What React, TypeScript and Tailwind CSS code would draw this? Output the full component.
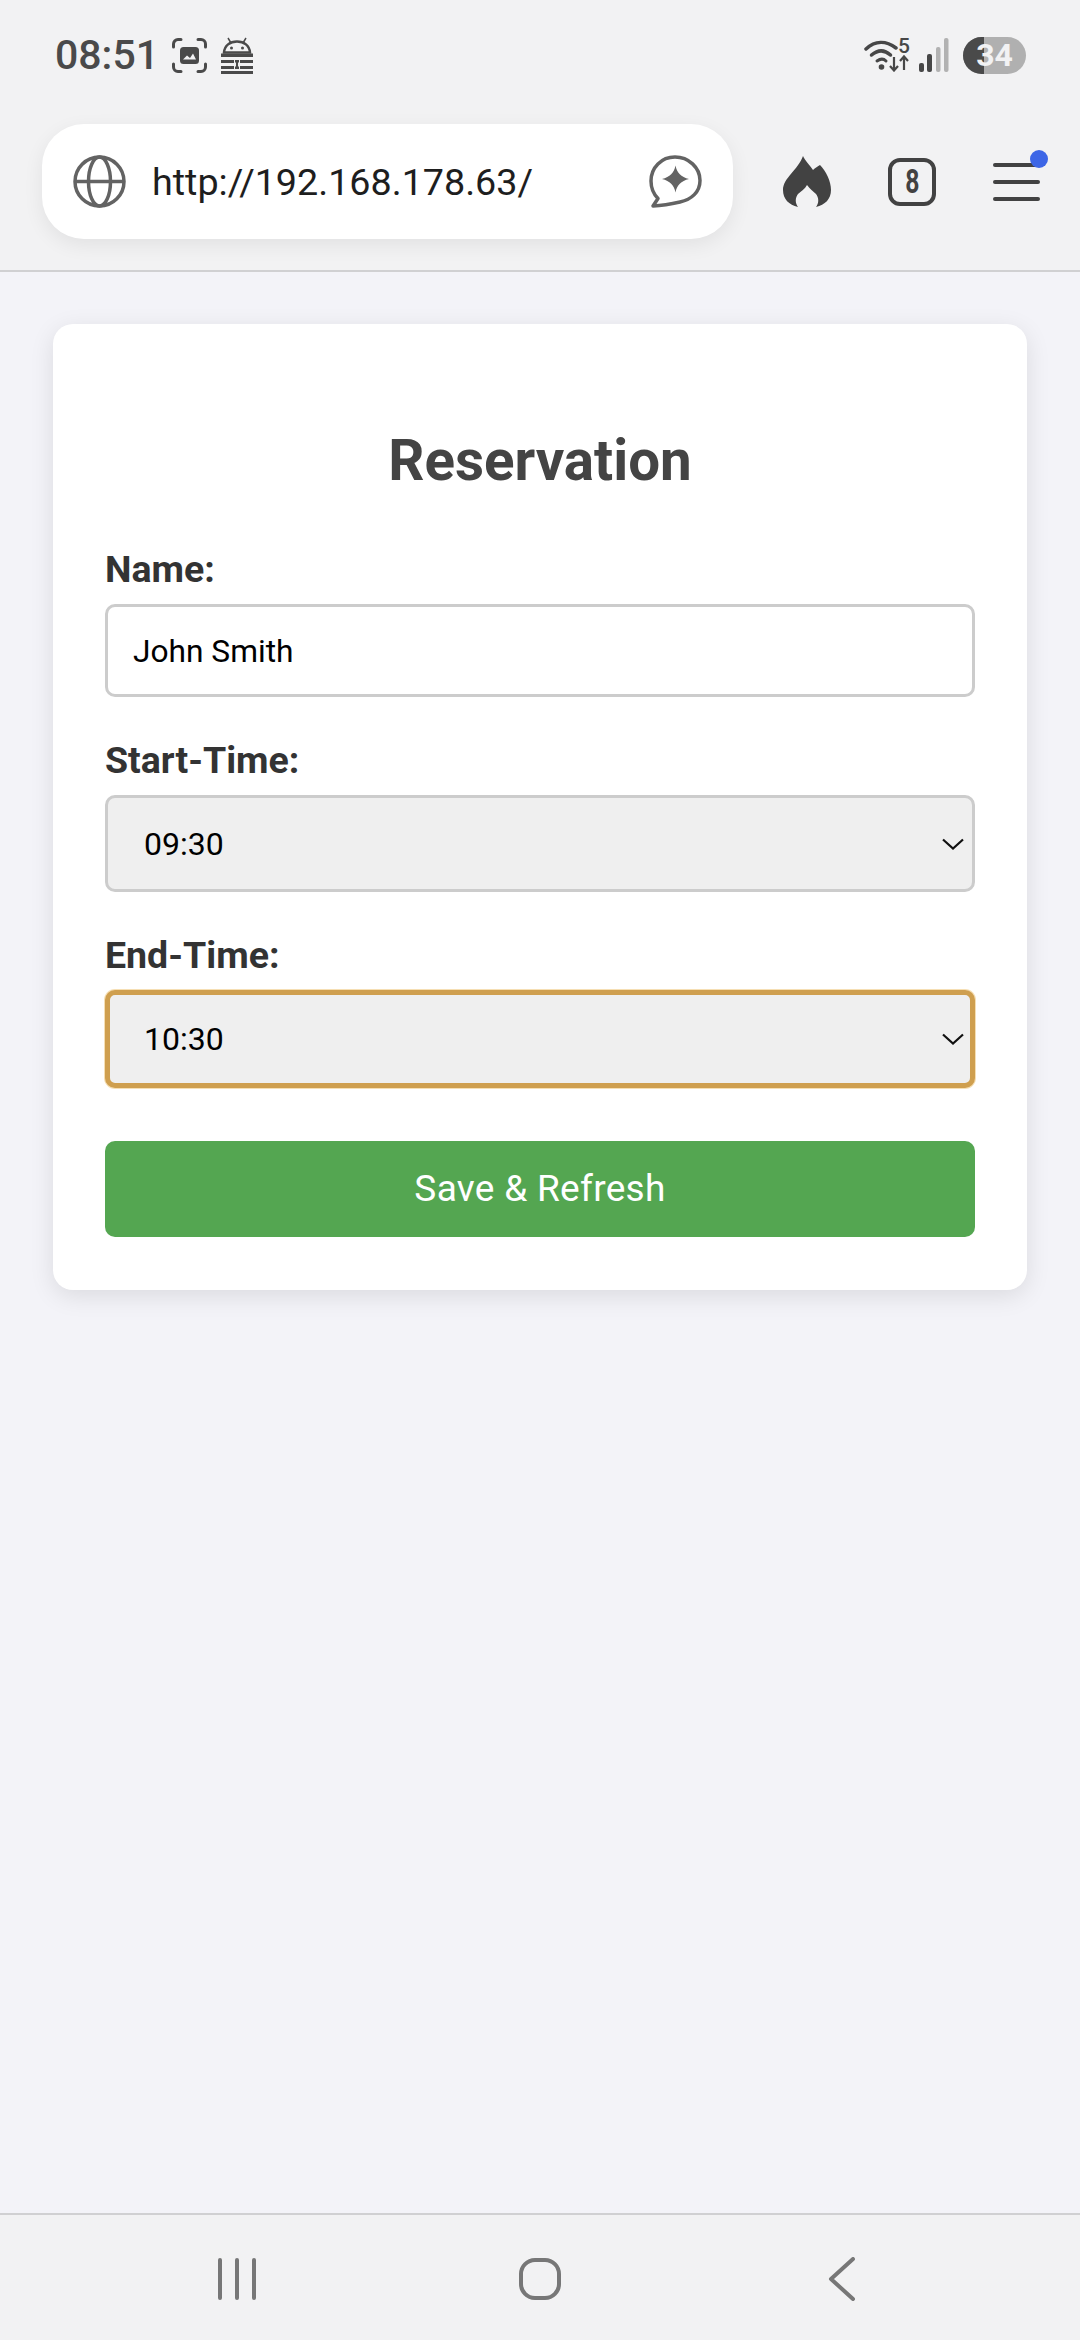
import React from 'react';

function ScreenshotIcon() {
  return (
    <svg width="35" height="35" viewBox="0 0 35 35" fill="none">
      <path d="M1.5 9V6a4.5 4.5 0 0 1 4.5-4.5h3M26 1.500h3A4.500 4.500 0 0 1 33.500 6v3M33.500 26v3a4.500 4.500 0 0 1-4.500 4.500h-3M9 33.500H6A4.500 4.500 0 0 1 1.500 29v-3" stroke="#4a4a4a" strokeWidth="3" strokeLinecap="round" />
      <rect x="8" y="9" width="19" height="17" rx="3.500" fill="#4a4a4a" />
      <path d="M11 21.500l4-4 3 2.500 3-4.500 3 6z" fill="#f2f2f3" />
    </svg>
  );
}

function KeyDroidIcon() {
  return (
    <svg width="34" height="37" viewBox="0 0 34 37" fill="none">
      <path d="M8 1l3 5M26 1l-3 5" stroke="#4a4a4a" strokeWidth="1.500" />
      <path d="M4 15.500C4.500 8.500 10 4.500 17 4.500s12.500 4 13 11z" stroke="#4a4a4a" strokeWidth="2.500" fill="none" />
      <circle cx="11.500" cy="11" r="1.500" fill="#4a4a4a" />
      <circle cx="22.500" cy="11" r="1.500" fill="#4a4a4a" />
      <rect x="1" y="16.500" width="32" height="3.500" fill="#4a4a4a" />
      <rect x="1" y="23" width="13" height="3" fill="#4a4a4a" />
      <rect x="20" y="23" width="13" height="3" fill="#4a4a4a" />
      <rect x="1" y="29" width="13" height="3" fill="#4a4a4a" />
      <rect x="20" y="29" width="13" height="3" fill="#4a4a4a" />
      <rect x="1" y="34" width="32" height="3" fill="#4a4a4a" />
      <path d="M15 23h4v2.500h-1v4h1V32h-4v-2.500h1v-4h-1z" fill="#4a4a4a" />
    </svg>
  );
}

function WifiIcon() {
  return (
    <div className="relative h-[34px] w-[46px]">
      <svg width="46" height="34" viewBox="0 0 46 34" fill="none" className="absolute left-0 top-0">
        <path d="M2 11C11 2.500 22 2.500 32 10" stroke="#474747" strokeWidth="3.500" strokeLinecap="round" />
        <path d="M7.500 17c6.500-5.500 13-5.500 19 0" stroke="#474747" strokeWidth="3.500" strokeLinecap="round" />
        <path d="M13 23c3.500-2.500 6.500-2.500 9 0" stroke="#474747" strokeWidth="3" strokeLinecap="round" />
        <circle cx="17.500" cy="29" r="2.800" fill="#474747" />
        <path d="M30 19v13M26 28l4 4.500 4-4.500" stroke="#474747" strokeWidth="2.200" />
        <path d="M40 32V19M36 23l4-4.500 4 4.500" stroke="#474747" strokeWidth="2.200" />
      </svg>
      <span className="absolute right-0 top-[-3px] text-[21px] font-medium leading-[22px] text-[#474747]">5</span>
    </div>
  );
}

function SignalIcon() {
  return (
    <svg width="30" height="34" viewBox="0 0 30 34" fill="none">
      <rect x="0" y="25" width="5" height="9" rx="2" fill="#474747" />
      <rect x="8" y="16" width="5" height="18" rx="2" fill="#474747" />
      <rect x="17" y="9" width="4.500" height="25" rx="2" fill="#b2b2b2" />
      <rect x="25" y="0" width="4.500" height="34" rx="2" fill="#b2b2b2" />
    </svg>
  );
}

function Battery() {
  return (
    <div className="relative flex h-[37px] w-[63px] items-center justify-center overflow-hidden rounded-full bg-[#b0b0b0]">
      <div className="absolute inset-y-0 left-0 w-[21px] bg-[#4a4a4a]" />
      <span className="relative text-[32px] font-bold leading-none text-[#f2f2f3]">34</span>
    </div>
  );
}

function GlobeIcon() {
  return (
    <svg width="53" height="53" viewBox="0 0 53 53" fill="none" stroke="#636363" strokeWidth="3.500">
      <circle cx="26.500" cy="26.500" r="24.500" />
      <ellipse cx="26.500" cy="26.500" rx="11" ry="24.500" />
      <path d="M2 26.500h49" />
    </svg>
  );
}

function ChatIcon() {
  return (
    <svg width="53" height="53" viewBox="0 0 53 53" fill="none">
      <path d="M4 51l5-7.500C4 38.500 2 32.500 2 26 2 12.500 12.500 2 26 2s25 10.500 25 23.500C51 37 42.500 44.500 31 47c-9 2-18 3.500-27 4z" stroke="#636363" strokeWidth="3.500" strokeLinejoin="round" />
      <path d="M26.500 10.500C28 18 32 22 40 24c-8 2-12 6-13.500 13.500C25 30 21 26 13 24c8-2 12-6 13.500-13.500z" fill="#636363" />
    </svg>
  );
}

function FlameIcon() {
  return (
    <svg width="48" height="52" viewBox="0 0 48 52" fill="#424242">
      <path d="M20 0C22 5 27 9 30 14C32 12 35 10 37 9C43 15 48 25 48 34C48 43 42 49 33 51C36 47 36 42 33 38C30 35 27 33 24 29C22 33 18 35 15 38C12 42 12 47 15 51C6 49 0 43 0 34C0 22 15 14 20 0Z" />
    </svg>
  );
}

function Chevron() {
  return (
    <svg width="22" height="13" viewBox="0 0 22 13" fill="none" stroke="#111" strokeWidth="2.200" className="absolute right-[11px] top-1/2 -translate-y-1/2">
      <path d="M1 2l10 9 10-9" />
    </svg>
  );
}

function Field({ label, value, focused }: { label: string; value: string; focused?: boolean }) {
  return (
    <div className="mb-[40px]">
      <label className="mb-[16px] block h-[42px] text-[37.500px] font-bold leading-[46px] text-[#333]">{label}</label>
      <div className="relative">
        <select
          defaultValue={value}
          className={
            focused
              ? 'h-[98px] w-full appearance-none rounded-[10px] border-[5px] border-[#cf9f4f] bg-[#efefef] pl-[34px] text-[32px] text-black outline-none shadow-[0_0_0_1px_#f6dfb4]'
              : 'h-[97px] w-full appearance-none rounded-[10px] border-[3px] border-[#ccc] bg-[#efefef] pl-[36px] text-[32px] text-black outline-none'
          }
        >
          <option>{value}</option>
        </select>
        <Chevron />
      </div>
    </div>
  );
}

export default function App() {
  return (
    <div className="flex h-[2340px] w-[1080px] flex-col bg-[#f3f3f8] font-['Roboto',sans-serif]">
      <header className="h-[272px] border-b-2 border-[#d0d0d2] bg-[#f2f2f3]">
        <div className="flex h-[110px] items-center pl-[55px] pr-[54px]">
          <span className="w-[117px] text-[41px] font-medium leading-none text-[#4a4a4a]">08:51</span>
          <div className="flex items-center gap-[13px]">
            <ScreenshotIcon />
            <KeyDroidIcon />
          </div>
          <div className="ml-auto flex items-center">
            <WifiIcon />
            <div className="ml-[9px]">
              <SignalIcon />
            </div>
            <div className="ml-[14px]">
              <Battery />
            </div>
          </div>
        </div>
        <div className="mt-[14px] flex items-center pl-[42px]">
          <div className="flex h-[115px] w-[691px] items-center rounded-[42px] bg-white pl-[31px] pr-[31px] shadow-[0_6px_20px_rgba(0,0,0,0.07)]">
            <GlobeIcon />
            <span className="ml-[26px] pt-[3px] text-[37.700px] leading-none text-[#1e1e1e]">http://192.168.178.63/</span>
            <div className="ml-auto">
              <ChatIcon />
            </div>
          </div>
          <div className="ml-[50px]">
            <FlameIcon />
          </div>
          <div className="ml-[57px] flex h-[48px] w-[48px] items-center justify-center rounded-[12px] border-[4px] border-[#424242]">
            <span className="scale-x-75 text-[33px] font-bold leading-none text-[#424242]">8</span>
          </div>
          <div className="relative ml-[57px] flex h-[38px] w-[47px] flex-col justify-between">
            <div className="h-[4px] rounded-full bg-[#424242]" />
            <div className="h-[4px] rounded-full bg-[#424242]" />
            <div className="h-[4px] rounded-full bg-[#424242]" />
            <div className="absolute right-[-8px] top-[-13px] h-[18px] w-[18px] rounded-full bg-[#3d66e6]" />
          </div>
        </div>
      </header>

      <main className="flex-1 px-[53px] pt-[52px]">
        <div className="h-[966px] rounded-[20px] bg-white px-[52px] pt-[104px] shadow-[0_6px_24px_rgba(0,0,0,0.1)]">
          <h1 className="mb-[54px] h-[64px] text-center text-[56.500px] font-bold leading-[66px] text-[#444]">Reservation</h1>
          <div className="mb-[40px]">
            <label className="mb-[16px] block h-[42px] text-[37.500px] font-bold leading-[46px] text-[#333]">Name:</label>
            <input
              defaultValue="John Smith"
              className="h-[93px] w-full rounded-[10px] border-[3px] border-[#ccc] bg-white pl-[25px] pt-[2px] text-[31.700px] text-black outline-none"
            />
          </div>
          <Field label="Start-Time:" value="09:30" />
          <Field label="End-Time:" value="10:30" focused />
          <button className="mt-[13px] h-[96px] w-full rounded-[10px] bg-[#54a651] text-[37px] tracking-[0.3px] text-white">
            Save &amp; Refresh
          </button>
        </div>
      </main>

      <nav className="flex h-[127px] items-center justify-between border-t-2 border-[#d0d0d2] bg-[#f2f2f3] pl-[207px] pr-[208px] pt-[3px]">
        <div className="flex w-[60px] justify-center">
          <svg width="40" height="42" viewBox="0 0 40 42" stroke="#777" strokeWidth="4" strokeLinecap="round">
            <path d="M3 2v38M20 2v38M37 2v38" />
          </svg>
        </div>
        <div className="flex w-[60px] justify-center">
          <div className="h-[42px] w-[42px] rounded-[16px] border-[4px] border-[#777]" />
        </div>
        <div className="flex w-[60px] justify-center">
          <svg width="28" height="44" viewBox="0 0 28 44" fill="none" stroke="#777" strokeWidth="4" strokeLinecap="round" strokeLinejoin="round">
            <path d="M25 2L3 22l22 20" />
          </svg>
        </div>
      </nav>
    </div>
  );
}
